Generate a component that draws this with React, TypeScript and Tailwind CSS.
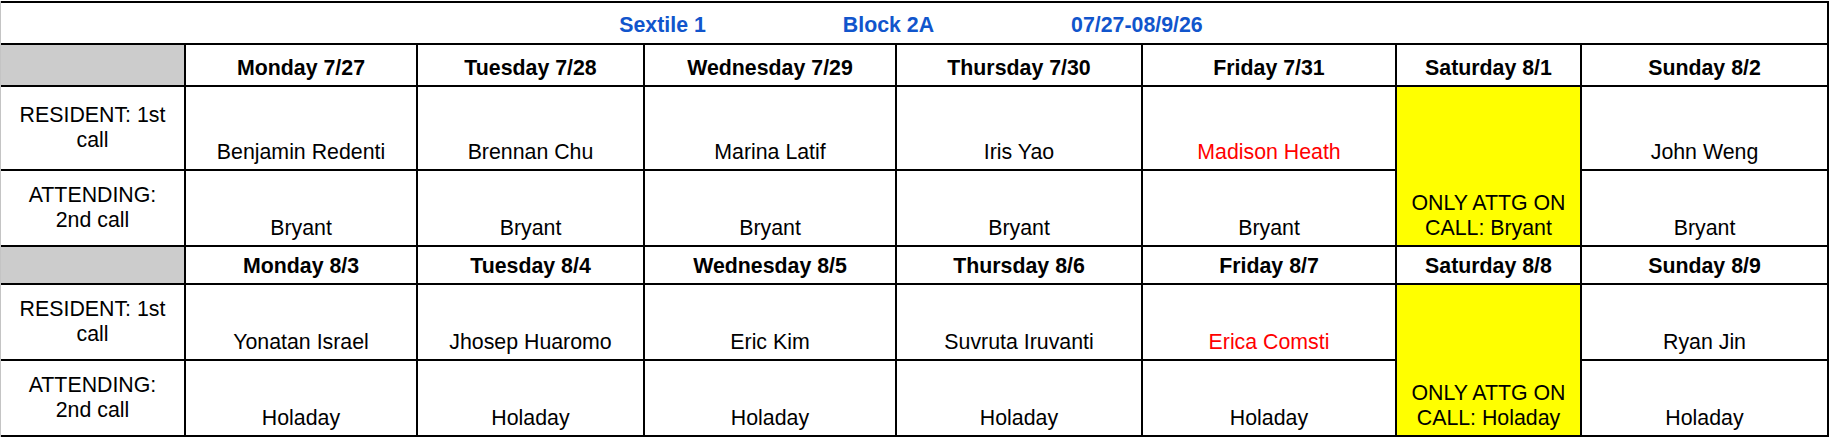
import { Fragment } from "react";

const WEEKS = [
  {
    days: ["Monday 7/27", "Tuesday 7/28", "Wednesday 7/29", "Thursday 7/30", "Friday 7/31", "Saturday 8/1", "Sunday 8/2"],
    residents: ["Benjamin Redenti", "Brennan Chu", "Marina Latif", "Iris Yao", "Madison Heath"],
    sunday: "John Weng",
    attending: "Bryant",
  },
  {
    days: ["Monday 8/3", "Tuesday 8/4", "Wednesday 8/5", "Thursday 8/6", "Friday 8/7", "Saturday 8/8", "Sunday 8/9"],
    residents: ["Yonatan Israel", "Jhosep Huaromo", "Eric Kim", "Suvruta Iruvanti", "Erica Comsti"],
    sunday: "Ryan Jin",
    attending: "Holaday",
  },
];

function Cell({ children, className = "bg-white" }: { children?: React.ReactNode; className?: string }) {
  return (
    <div className={`flex flex-col items-center justify-end pb-[4px] text-center ${className}`}>
      {children}
    </div>
  );
}

function Label({ top, bottom }: { top: string; bottom: string }) {
  return (
    <div className="flex flex-col items-center justify-center bg-white text-center">
      <span>{top}</span>
      <span>{bottom}</span>
    </div>
  );
}

export default function App() {
  return (
    <div className="h-[437px] w-[1829px] bg-white font-['Liberation_Sans',Arial,sans-serif] text-[21.33px] leading-[25px] text-black">
      <div className="mt-[1px] grid grid-cols-[183px_230px_225px_250px_244px_252px_183px_245px] grid-rows-[40px_40px_82px_74px_36px_74px_74px] gap-[2px] border-l border-l-[#c4c4c4] bg-black pb-[2px] pr-[2px] pt-[2px]">
        <div className="col-span-8 flex items-end justify-center gap-[137px] bg-white pb-[5px] pr-[6px] font-bold text-[#1155cc]">
          <span>Sextile 1</span>
          <span>Block 2A</span>
          <span>07/27-08/9/26</span>
        </div>

        {WEEKS.map((w) => (
          <Fragment key={w.days[0]}>
            <div className="bg-[#cccccc]" />
            {w.days.map((d) => (
              <Cell key={d} className="bg-white font-bold">
                {d}
              </Cell>
            ))}

            <Label top="RESIDENT: 1st" bottom="call" />
            {w.residents.map((r, i) => (
              // friday's resident is written in red
              <Cell key={r} className={i === 4 ? "bg-white text-[#ff0000]" : "bg-white"}>
                {r}
              </Cell>
            ))}
            <Cell className="row-span-2 bg-[#ffff00]">
              <span>ONLY ATTG ON</span>
              <span>CALL: {w.attending}</span>
            </Cell>
            <Cell>{w.sunday}</Cell>

            <Label top="ATTENDING:" bottom="2nd call" />
            {[0, 1, 2, 3, 4, 6].map((i) => (
              <Cell key={i}>{w.attending}</Cell>
            ))}
          </Fragment>
        ))}
      </div>
    </div>
  );
}
